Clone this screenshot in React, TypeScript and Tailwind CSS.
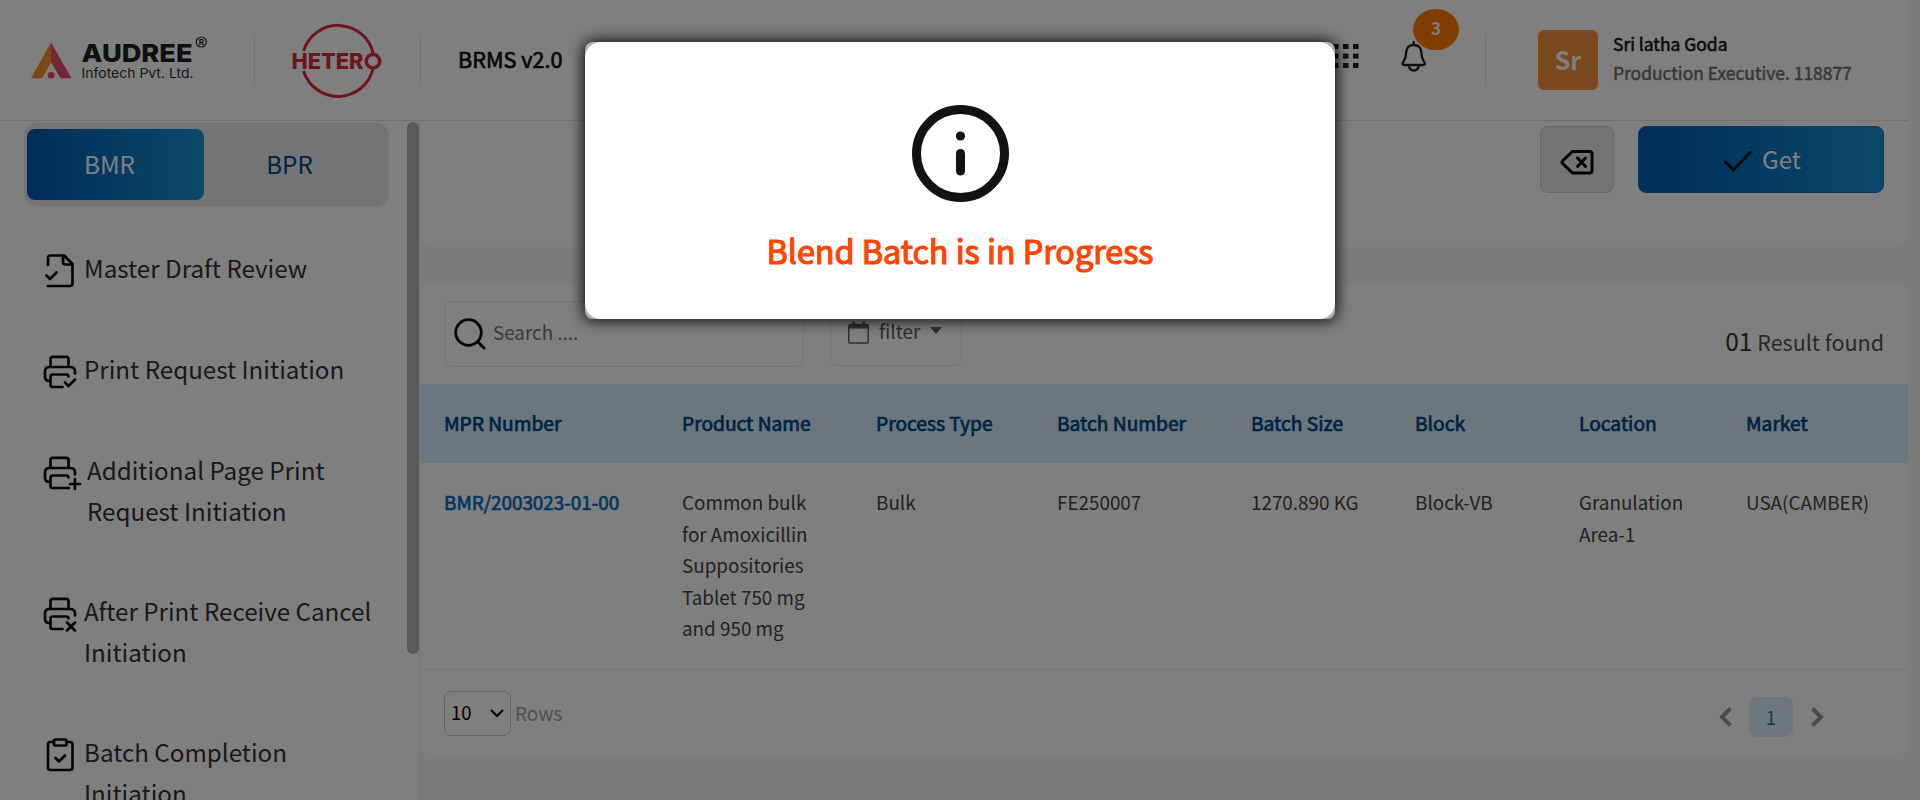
import React from "react";

const columns = [
  { title: "MPR Number", value: "BMR/2003023-01-00", width: "w-[238px]" },
  { title: "Product Name", value: "Common bulk\nfor Amoxicillin\nSuppositories\nTablet 750 mg\nand 950 mg", width: "w-[194px]" },
  { title: "Process Type", value: "Bulk", width: "w-[181px]" },
  { title: "Batch Number", value: "FE250007", width: "w-[194px]" },
  { title: "Batch Size", value: "1270.890 KG", width: "w-[164px]" },
  { title: "Block", value: "Block-VB", width: "w-[164px]" },
  { title: "Location", value: "Granulation\nArea-1", width: "w-[167px]" },
  { title: "Market", value: "USA(CAMBER)", width: "w-[162px]" },
];

function Glyph({ children }: { children: React.ReactNode }) {
  return (
    <svg viewBox="0 0 34 34" className="h-[34px] w-[34px] shrink-0 overflow-visible" fill="none" stroke="#0d0d0d" strokeWidth="2.7" strokeLinecap="round" strokeLinejoin="round">
      {children}
    </svg>
  );
}

function Printer({ children, short }: { children: React.ReactNode; short?: boolean }) {
  return (
    <Glyph>
      <path d="M7.500 11V4Q7.500 1.800 9.700 1.800h13.600Q25.500 1.800 25.500 4V11" />
      <path d="M6.500 26Q2 26 2 21.500V16.500Q2 12 6.500 12H27Q32 12 32 16.500V18.500" />
      <path d={short ? "M19.500 32H9.700Q7.500 32 7.500 29.800V21.700Q7.500 19.500 9.700 19.500H23.300Q25.500 19.500 25.500 21.500" : "M26 32H9.700Q7.500 32 7.500 29.800V21.700Q7.500 19.500 9.700 19.500H23.300Q25.500 19.500 25.500 21.500"} />
      {children}
    </Glyph>
  );
}

const menu = [
  {
    lines: ["Master Draft Review"],
    box: "mb-[60px]",
    text: "ml-[7px]",
    icon: (
      <Glyph>
        <path d="M5 11V4Q5 1.500 7.500 1.500H21L29.500 10V29.500Q29.500 32 27 32H5" />
        <path d="M20 2V8Q20 10.500 22.500 10.500H29" />
        <path d="M3.500 21.500L7 25L13.500 18.500" />
      </Glyph>
    ),
  },
  { lines: ["Print Request Initiation"], box: "mb-[60px]", text: "ml-[7px]", icon: <Printer short><path d="M22 27.500L25.500 31L32 24.500" /></Printer> },
  { lines: ["Additional Page Print", "Request Initiation"], box: "mb-[59px]", text: "ml-[10px]", icon: <Printer><path d="M27 28H37M31.900 23V33" /></Printer> },
  { lines: ["After Print Receive Cancel", "Initiation"], box: "mb-[59px]", text: "ml-[7px]", icon: <Printer short><path d="M24 25.500L32 33.500M32 25.500L24 33.500" /></Printer> },
  {
    lines: ["Batch Completion", "Initiation"],
    box: "",
    text: "ml-[7px]",
    icon: (
      <Glyph>
        <path d="M11 4H7.500Q5 4 5 6.500V29.500Q5 32 7.500 32H27Q29.500 32 29.500 29.500V6.500Q29.500 4 27 4H23.500" />
        <rect x="11" y="1.500" width="12.500" height="6" rx="1.500" />
        <path d="M12.500 20L16 23.500L22 17.500" />
      </Glyph>
    ),
  },
];

function Header() {
  return (
    <header className="flex h-[121px] w-[1908px] shrink-0 items-start border-b border-[#e2e2e2] bg-white">
      <svg viewBox="0 0 180 50" className="ml-[30px] mt-[35px] h-[50px] w-[180px] shrink-0">
        <path d="M21 7.500L1 43.300H12L21 27.500Z" fill="#f5922f" />
        <path d="M21 7.500V27.500L30.500 43.300H41.500Z" fill="#e84f66" />
        <rect x="17.800" y="37" width="6.600" height="6.600" rx="2.500" fill="#e84f66" />
        <text x="51.500" y="27.200" fontFamily="Inter" fontSize="25" fontWeight="800" fill="#202020" textLength="111" lengthAdjust="spacingAndGlyphs">AUDREE</text>
        <text x="51.500" y="43.300" fontFamily="Inter" fontSize="13.500" fill="#303030" textLength="112" lengthAdjust="spacingAndGlyphs">Infotech Pvt. Ltd.</text>
        <circle cx="171.300" cy="7" r="5" fill="none" stroke="#202020" strokeWidth="1.200" />
        <text x="168.700" y="10" fontFamily="Inter" fontSize="8" fontWeight="700" fill="#202020">R</text>
      </svg>
      <div className="ml-[44px] mt-[34px] h-[52px] w-px shrink-0 bg-[#e2e2e2]" />
      <svg viewBox="0 0 94 80" className="ml-[36px] mt-[20px] h-[80px] w-[94px] shrink-0">
        <path d="M12.600 31A36 36 0 0 1 82.200 33.500M82.200 48A36 36 0 0 1 12.600 51" fill="none" stroke="#dc2a35" strokeWidth="3" />
        <text x="0.500" y="49" fontFamily="Inter" fontSize="21" fontWeight="800" fill="#dc2a35" textLength="72" lengthAdjust="spacingAndGlyphs">HETER</text>
        <circle cx="82" cy="41.200" r="6.700" fill="none" stroke="#dc2a35" strokeWidth="3.500" />
      </svg>
      <div className="ml-[35px] mt-[34px] h-[52px] w-px shrink-0 bg-[#e2e2e2]" />
      <div className="ml-[37px] mt-[44px] h-[30px] text-[21.600px] leading-[30px] text-[#101010] [-webkit-text-stroke:0.7px_#101010]">BRMS v2.0</div>
      <div className="ml-auto mr-[42px] mt-[44px] shrink-0">
        <svg viewBox="0 0 26 24" className="h-[24px] w-[26px]" fill="#202020">
          {[0, 10, 20].map((x) => [0, 9.6, 19].map((y) => <rect key={`${x}-${y}`} x={x} y={y} width="5.500" height="5" />))}
        </svg>
      </div>
      <div className="relative mr-[58px] mt-[41px] shrink-0">
        <svg viewBox="0 0 26 31" className="h-[31px] w-[26px]" fill="none" stroke="#202020" strokeWidth="2.300" strokeLinejoin="round" strokeLinecap="round">
          <path d="M12.800 1V4M12.800 4C7 4 5 8.500 5 12.500C5 18 3 19.500 2 21.500C1.300 23.200 2 24 3.500 24H22C23.600 24 24.300 23.200 23.500 21.500C22.500 19.500 20.500 18 20.500 12.500C20.500 8.500 18.500 4 12.800 4Z" />
          <path d="M8 25.500Q9 29.500 12.800 29.500T17.600 25.500" />
        </svg>
        <span className="absolute -top-[32px] left-[12px] flex h-[41px] w-[46px] items-center justify-center rounded-[50%] bg-[#ff7a00] pb-[3px] text-[17px] font-bold text-white">3</span>
      </div>
      <div className="mt-[34px] h-[52px] w-px shrink-0 bg-[#e2e2e2]" />
      <div className="ml-[52px] mt-[30px] flex h-[60px] w-[60px] shrink-0 items-center justify-center rounded-md bg-[#f9903c] text-[25px] font-bold text-white">Sr</div>
      <div className="ml-[15px] mt-[29px] w-[295px] shrink-0 whitespace-nowrap text-[17.450px] leading-[29px]">
        <div className="text-[#181818] [-webkit-text-stroke:0.6px_#181818]">Sri latha Goda</div>
        <div className="text-[#707070] [-webkit-text-stroke:0.5px_#707070]">Production Executive. 118877</div>
      </div>
    </header>
  );
}

function Sidebar() {
  return (
    <aside className="flex h-[679px] w-[420px] shrink-0 overflow-hidden border-r border-[#e8e8e8] bg-white">
      <div className="w-[407px] shrink-0">
        <div className="ml-[24px] mt-[2px] flex h-[83px] w-[365px] rounded-xl bg-[#e6e9ed] px-[3px] pt-[6px] text-[24.200px] leading-[69px]">
          <div className="h-[71px] w-[177px] rounded-lg bg-linear-to-r from-[#005ab4] to-[#1890d2] pr-[12px] text-center text-white">BMR</div>
          <div className="h-[71px] flex-1 pr-[11px] text-center text-[#00468c]">BPR</div>
        </div>
        <nav className="mt-[41px]">
          {menu.map((m) => (
            <div key={m.lines[0]} className={`flex pl-[43px] ${m.box}`}>
              <div className="mt-[7px] flex">{m.icon}</div>
              <div className={`whitespace-nowrap text-[24.200px] leading-[41px] text-[#333333] ${m.text}`}>
                {m.lines.map((l) => <div key={l}>{l}</div>)}
              </div>
            </div>
          ))}
        </nav>
      </div>
      <div className="mt-px h-[532px] w-[12px] shrink-0 rounded-full bg-[#b4b4b4]" />
    </aside>
  );
}

function Actions() {
  return (
    <section className="flex h-[126px] justify-end gap-[24px] rounded-b-[16px] bg-white pr-[24px] pt-[5px]">
      <button className="flex h-[67px] w-[74px] items-center justify-center rounded-lg border border-[#cfd1d8] bg-[#e6e8ec]">
        <svg viewBox="0 0 34 26" className="mt-[4px] h-[26px] w-[34px]" fill="none" stroke="#080808" strokeWidth="3" strokeLinecap="round" strokeLinejoin="round">
          <path d="M12.500 2.500H29.500Q32 2.500 32 5V21.500Q32 24 29.500 24H12.500L2.800 14.700Q1.300 13.200 2.800 11.700Z" />
          <path d="M17.500 9L25.500 17.500M25.500 9L17.500 17.500" />
        </svg>
      </button>
      <button className="flex h-[67px] w-[246px] items-center justify-center rounded-lg border border-[#1270c0] bg-linear-to-r from-[#005ab4] to-[#1890d2] pl-[3px] text-[24.200px] text-white">
        <svg viewBox="0 0 28 22" className="mr-[10px] mt-[2px] h-[22px] w-[28px]" fill="none" stroke="#101010" strokeWidth="2.800" strokeLinecap="round"><path d="M1.500 12L9.500 20L26.500 2" /></svg>
        <span className="pb-px">Get</span>
      </button>
    </section>
  );
}

function Results() {
  return (
    <section className="mt-[36px] h-[472px] rounded-[14px] bg-white">
      <div className="flex h-[101px] pl-[24px] pt-[18px]">
        <div className="flex h-[66px] w-[360px] items-center rounded-lg border border-[#e6e6e6] text-[18.850px] text-[#777777]">
          <svg viewBox="0 0 32 32" className="ml-[9px] mr-[7px] h-[32px] w-[32px]" fill="none" stroke="#0c0c0c" strokeWidth="2.800"><circle cx="14.500" cy="14.500" r="12.800" /><path d="M23.500 23.500L31 31" /></svg>
          <span className="pb-[3px]">Search ....</span>
        </div>
        <div className="ml-[26px] flex h-[65px] w-[132px] items-center rounded-lg border border-[#e6e6e6] text-[18.850px] text-[#5c6067]">
          <svg viewBox="0 0 21 23" className="mb-[2px] ml-[17px] mr-[10px] h-[23px] w-[21px]" fill="none" stroke="#5c6067" strokeWidth="1.500"><rect x="0.800" y="3.500" width="19.400" height="18.500" rx="1" /><path d="M1 5.500H20" strokeWidth="4" /><path d="M5.500 0.500V6M15.500 0.500V6" strokeWidth="2.500" /></svg>
          <span className="pb-[4px]">filter</span>
          <svg viewBox="0 0 12 7" className="mb-[6px] ml-[10px] h-[7px] w-[12px]" fill="#5c6067"><path d="M0 0H12L6 7Z" /></svg>
        </div>
        <div className="ml-auto mr-[24px] mt-[19px] whitespace-nowrap text-[21.500px] leading-[42px] text-[#50525c]"><span className="text-[24.500px] text-[#303030]">01</span> Result found</div>
      </div>
      <div className="flex h-[79px] bg-[#d6ecfa] pl-[24px] text-[19.200px] leading-[78px] text-[#00468c] [-webkit-text-stroke:0.7px_#00468c]">
        {columns.map((c) => <div key={c.title} className={`${c.width} shrink-0 whitespace-nowrap`}>{c.title}</div>)}
      </div>
      <div className="flex h-[207px] border-b border-[#ebebeb] pl-[24px] pt-[23px] text-[18.850px] leading-[31.500px] text-[#444444]">
        {columns.map((c, i) => (
          <div key={c.title} className={`${c.width} shrink-0 whitespace-pre ${i === 0 ? "text-[#0a6fbd] [-webkit-text-stroke:0.7px_#0a6fbd]" : ""}`}>{c.value}</div>
        ))}
      </div>
      <div className="flex h-[85px] items-start pl-[24px]">
        <div className="mt-[21px] flex h-[45px] w-[67px] items-center rounded-[7px] border border-[#c8c8c8] pl-[6px] text-[18.500px] text-black">
          <span className="pb-[2px]">10</span>
          <svg viewBox="0 0 14 9" className="mb-px ml-[18px] h-[9px] w-[14px]" fill="none" stroke="#000" strokeWidth="2.200"><path d="M1 1L7 7L13 1" /></svg>
        </div>
        <div className="ml-[4px] mt-[20px] text-[19px] leading-[45px] text-[#a0a0a0]">Rows</div>
        <div className="ml-auto mr-[84px] mt-[27px] flex h-[40px] items-center">
          <svg viewBox="0 0 13 20" className="h-[20px] w-[13px]" fill="none" stroke="#979797" strokeWidth="4"><path d="M11.500 1.500L3 10L11.500 18.500" /></svg>
          <div className="ml-[17px] mr-[18px] h-[40px] w-[44px] rounded-lg bg-[#d6ecfa] text-center text-[18.500px] leading-[41px] text-[#0f7bc0]">1</div>
          <svg viewBox="0 0 13 20" className="h-[20px] w-[13px]" fill="none" stroke="#979797" strokeWidth="4"><path d="M1.500 1.500L10 10L1.500 18.500" /></svg>
        </div>
      </div>
    </section>
  );
}

function Dialog() {
  return (
    <div className="fixed inset-0 flex items-start justify-center bg-black/50 pt-[42px]">
      <div className="h-[277px] w-[750px] overflow-visible rounded-lg bg-[#b4b4b4] shadow-[0_0_15px_1px_#000000]">
        <div className="flex h-full flex-col items-center rounded-[16px] bg-white pt-[63px]">
          <svg viewBox="0 0 97 97" className="h-[97px] w-[97px]">
            <circle cx="48.500" cy="48.500" r="44" fill="none" stroke="#121212" strokeWidth="9" />
            <circle cx="48.500" cy="31" r="4.600" fill="#121212" />
            <rect x="44" y="44" width="9" height="26.500" rx="4.500" fill="#121212" />
          </svg>
          <div className="mt-[22px] whitespace-nowrap text-[32.300px] leading-[52px] text-[#ff4500] [-webkit-text-stroke:1.200px_#ff4500]">Blend Batch is in Progress</div>
        </div>
      </div>
    </div>
  );
}

export default function App() {
  return (
    <div className="h-[800px] w-[1920px] overflow-hidden bg-[#f6faf8] font-['Noto_Sans_CJK_SC',sans-serif]">
      <Header />
      <div className="flex w-[1908px]">
        <Sidebar />
        <main className="w-[1488px]">
          <Actions />
          <Results />
        </main>
      </div>
      <Dialog />
    </div>
  );
}
